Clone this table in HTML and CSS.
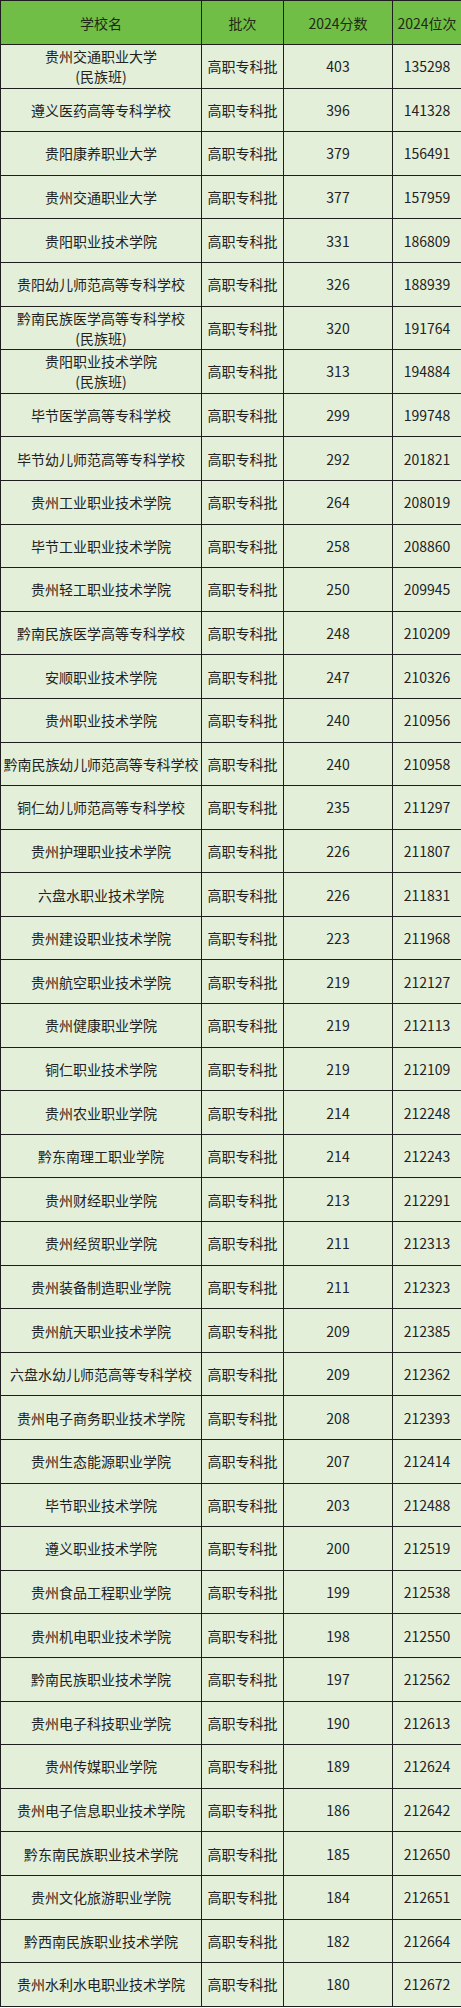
FILE: index.html
```html
<!DOCTYPE html>
<html lang="zh-CN">
<head>
<meta charset="utf-8">
<title>2024 高职专科批 分数与位次</title>
<link rel="stylesheet" href="styles.css">
</head>
<body>
<table class="score-table">
  <colgroup>
    <col class="c-name">
    <col class="c-batch">
    <col class="c-score">
    <col class="c-rank">
  </colgroup>
  <thead>
    <tr><th>学校名</th><th>批次</th><th>2024分数</th><th>2024位次</th></tr>
  </thead>
  <tbody>
    <tr><td>贵州交通职业大学<br>(民族班)</td><td>高职专科批</td><td>403</td><td>135298</td></tr>
    <tr><td>遵义医药高等专科学校</td><td>高职专科批</td><td>396</td><td>141328</td></tr>
    <tr><td>贵阳康养职业大学</td><td>高职专科批</td><td>379</td><td>156491</td></tr>
    <tr><td>贵州交通职业大学</td><td>高职专科批</td><td>377</td><td>157959</td></tr>
    <tr><td>贵阳职业技术学院</td><td>高职专科批</td><td>331</td><td>186809</td></tr>
    <tr><td>贵阳幼儿师范高等专科学校</td><td>高职专科批</td><td>326</td><td>188939</td></tr>
    <tr><td>黔南民族医学高等专科学校<br>(民族班)</td><td>高职专科批</td><td>320</td><td>191764</td></tr>
    <tr><td>贵阳职业技术学院<br>(民族班)</td><td>高职专科批</td><td>313</td><td>194884</td></tr>
    <tr><td>毕节医学高等专科学校</td><td>高职专科批</td><td>299</td><td>199748</td></tr>
    <tr><td>毕节幼儿师范高等专科学校</td><td>高职专科批</td><td>292</td><td>201821</td></tr>
    <tr><td>贵州工业职业技术学院</td><td>高职专科批</td><td>264</td><td>208019</td></tr>
    <tr><td>毕节工业职业技术学院</td><td>高职专科批</td><td>258</td><td>208860</td></tr>
    <tr><td>贵州轻工职业技术学院</td><td>高职专科批</td><td>250</td><td>209945</td></tr>
    <tr><td>黔南民族医学高等专科学校</td><td>高职专科批</td><td>248</td><td>210209</td></tr>
    <tr><td>安顺职业技术学院</td><td>高职专科批</td><td>247</td><td>210326</td></tr>
    <tr><td>贵州职业技术学院</td><td>高职专科批</td><td>240</td><td>210956</td></tr>
    <tr><td class="tight">黔南民族幼儿师范高等专科学校</td><td>高职专科批</td><td>240</td><td>210958</td></tr>
    <tr><td>铜仁幼儿师范高等专科学校</td><td>高职专科批</td><td>235</td><td>211297</td></tr>
    <tr><td>贵州护理职业技术学院</td><td>高职专科批</td><td>226</td><td>211807</td></tr>
    <tr><td>六盘水职业技术学院</td><td>高职专科批</td><td>226</td><td>211831</td></tr>
    <tr><td>贵州建设职业技术学院</td><td>高职专科批</td><td>223</td><td>211968</td></tr>
    <tr><td>贵州航空职业技术学院</td><td>高职专科批</td><td>219</td><td>212127</td></tr>
    <tr><td>贵州健康职业学院</td><td>高职专科批</td><td>219</td><td>212113</td></tr>
    <tr><td>铜仁职业技术学院</td><td>高职专科批</td><td>219</td><td>212109</td></tr>
    <tr><td>贵州农业职业学院</td><td>高职专科批</td><td>214</td><td>212248</td></tr>
    <tr><td>黔东南理工职业学院</td><td>高职专科批</td><td>214</td><td>212243</td></tr>
    <tr><td>贵州财经职业学院</td><td>高职专科批</td><td>213</td><td>212291</td></tr>
    <tr><td>贵州经贸职业学院</td><td>高职专科批</td><td>211</td><td>212313</td></tr>
    <tr><td>贵州装备制造职业学院</td><td>高职专科批</td><td>211</td><td>212323</td></tr>
    <tr><td>贵州航天职业技术学院</td><td>高职专科批</td><td>209</td><td>212385</td></tr>
    <tr><td>六盘水幼儿师范高等专科学校</td><td>高职专科批</td><td>209</td><td>212362</td></tr>
    <tr><td>贵州电子商务职业技术学院</td><td>高职专科批</td><td>208</td><td>212393</td></tr>
    <tr><td>贵州生态能源职业学院</td><td>高职专科批</td><td>207</td><td>212414</td></tr>
    <tr><td>毕节职业技术学院</td><td>高职专科批</td><td>203</td><td>212488</td></tr>
    <tr><td>遵义职业技术学院</td><td>高职专科批</td><td>200</td><td>212519</td></tr>
    <tr><td>贵州食品工程职业学院</td><td>高职专科批</td><td>199</td><td>212538</td></tr>
    <tr><td>贵州机电职业技术学院</td><td>高职专科批</td><td>198</td><td>212550</td></tr>
    <tr><td>黔南民族职业技术学院</td><td>高职专科批</td><td>197</td><td>212562</td></tr>
    <tr><td>贵州电子科技职业学院</td><td>高职专科批</td><td>190</td><td>212613</td></tr>
    <tr><td>贵州传媒职业学院</td><td>高职专科批</td><td>189</td><td>212624</td></tr>
    <tr><td>贵州电子信息职业技术学院</td><td>高职专科批</td><td>186</td><td>212642</td></tr>
    <tr><td>黔东南民族职业技术学院</td><td>高职专科批</td><td>185</td><td>212650</td></tr>
    <tr><td>贵州文化旅游职业学院</td><td>高职专科批</td><td>184</td><td>212651</td></tr>
    <tr><td>黔西南民族职业技术学院</td><td>高职专科批</td><td>182</td><td>212664</td></tr>
    <tr><td>贵州水利水电职业技术学院</td><td>高职专科批</td><td>180</td><td>212672</td></tr>
  </tbody>
</table>
</body>
</html>
```

FILE: styles.css
```css
html, body {
  margin: 0;
  padding: 0;
  background: #ffffff;
}

.score-table {
  width: 461px;
  table-layout: fixed;
  border-collapse: collapse;
  font-family: "Noto Sans CJK SC", "Noto Sans", sans-serif;
  font-size: 14px;
  line-height: 20px;
  color: #222222;
}

.c-name { width: 201px; }
.c-batch { width: 82px; }
.c-score { width: 109px; }
.c-rank { width: 69px; }

.score-table th,
.score-table td {
  border: 1px solid #1e1e1e;
  padding: 0;
  text-align: center;
  vertical-align: middle;
  white-space: nowrap;
  overflow: hidden;
}

.score-table th {
  height: 43px;
  background: #70be45;
  font-weight: normal;
  color: #1f2a14;
}

.score-table td {
  height: 42.6px;
  background: #e3efd9;
}

.score-table td.tight {
  letter-spacing: -0.1px;
}
```
